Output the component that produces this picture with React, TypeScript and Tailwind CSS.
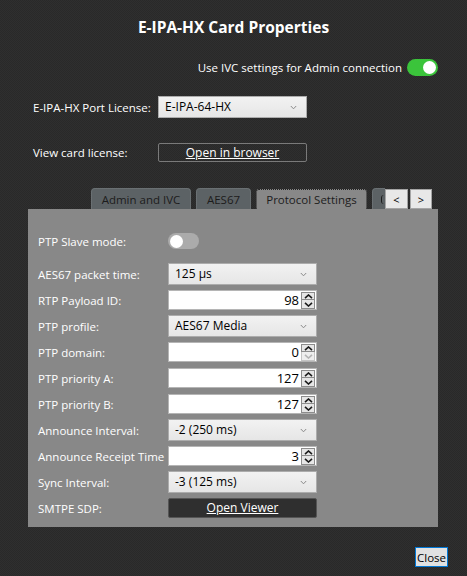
import React from "react";

const Chevron = () => (
  <svg width="7" height="5" viewBox="0 0 7 5" className="block">
    <path d="M0.8 1 L3.5 3.8 L6.2 1" fill="none" stroke="#8a8a8a" strokeWidth="1" />
  </svg>
);

function Select({ value }: { value: string }) {
  return (
    <div className="w-[149px] h-[22px] flex items-center justify-between pl-[6px] pr-[9px] border border-[#acacac] bg-gradient-to-b from-[#f2f2f2] to-[#e6e6e6] text-black text-[12px] leading-none">
      <span>{value}</span>
      <Chevron />
    </div>
  );
}

function Spinner({ downDisabled }: { downDisabled?: boolean }) {
  return (
    <div className="flex flex-col w-[14px] h-[17px] mr-[1px]">
      <div className="h-[8.5px] border border-[#8c8c8c] bg-[#e6e6e6] flex items-center justify-center">
        <svg width="9" height="5" viewBox="0 0 9 5">
          <path d="M1 4.2 L4.5 1 L8 4.2" fill="none" stroke="#1a1a1a" strokeWidth="1.6" />
        </svg>
      </div>
      <div
        className={
          downDisabled
            ? "h-[8.5px] border border-t-0 border-[#c4c4c4] bg-[#eeeeee] flex items-center justify-center"
            : "h-[8.5px] border border-t-0 border-[#8c8c8c] bg-[#e6e6e6] flex items-center justify-center"
        }
      >
        <svg width="9" height="5" viewBox="0 0 9 5">
          <path
            d="M1 0.8 L4.5 4 L8 0.8"
            fill="none"
            stroke={downDisabled ? "#b4b4b4" : "#1a1a1a"}
            strokeWidth="1.6"
          />
        </svg>
      </div>
    </div>
  );
}

function NumInput({ value, downDisabled }: { value: string; downDisabled?: boolean }) {
  return (
    <div className="w-[149px] h-[20px] bg-white border border-[#b5b5b5] flex items-center text-black text-[13px] leading-none">
      <span className="flex-1 text-right pr-[2px]">{value}</span>
      <Spinner downDisabled={downDisabled} />
    </div>
  );
}

function Row({ label, children }: { label: string; children: React.ReactNode }) {
  return (
    <div className="h-[26px] flex items-center">
      <div className="w-[130px] text-white text-[11.5px] whitespace-nowrap">{label}</div>
      {children}
    </div>
  );
}

export default function App() {
  return (
    <div className="w-[467px] h-[576px] bg-[#2c2c2c] bg-[repeating-conic-gradient(#2f2f2f_0_25%,#292929_0_50%)] bg-[length:2px_2px] font-['Segoe_UI','Open_Sans',sans-serif] flex flex-col overflow-hidden">
      <div className="pt-[16px] h-[38px] text-center text-white text-[15.5px] font-bold leading-[22px]">
        E-IPA-HX Card Properties
      </div>

      <div className="mt-[21px] flex items-center justify-end pr-[29px]">
        <span className="text-white text-[11.5px] mr-[5px]">Use IVC settings for Admin connection</span>
        <div className="w-[31px] h-[17px] rounded-full bg-[#3bc43b] flex items-center justify-end pr-[2px]">
          <div className="w-[13px] h-[13px] rounded-full bg-white" />
        </div>
      </div>

      <div className="mt-[20px] flex items-center pl-[33px]">
        <span className="w-[125px] text-white text-[11.5px]">E-IPA-HX Port License:</span>
        <Select value="E-IPA-64-HX" />
      </div>

      <div className="mt-[25px] flex items-center pl-[33px]">
        <span className="w-[125px] text-white text-[11.5px]">View card license:</span>
        <div className="w-[149px] h-[19px] border border-[#7a7a7a] rounded-[2px] flex items-center justify-center text-white text-[12px] underline">
          Open in browser
        </div>
      </div>

      <div className="mt-[26px] flex items-end pl-[91px] h-[21px]">
        <div className="w-[100px] h-[21px] rounded-t-[4px] bg-[#5c6265] border border-b-0 border-[#6a7073] flex items-center justify-center text-[#1c1c1c] text-[11.5px]">
          Admin and IVC
        </div>
        <div className="ml-[5px] w-[55px] h-[21px] rounded-t-[4px] bg-[#5c6265] border border-b-0 border-[#6a7073] flex items-center justify-center text-[#1c1c1c] text-[11.5px]">
          AES67
        </div>
        <div className="ml-[5px] w-[111px] h-[20px] rounded-t-[3px] bg-[#888888] border border-b-0 border-dotted border-[#222] flex items-center justify-center text-[#1c1c1c] text-[11.5px]">
          Protocol Settings
        </div>
        <div className="ml-[5px] w-[13px] h-[21px] rounded-tl-[4px] bg-[#5c6265] border border-b-0 border-r-0 border-[#6a7073] overflow-hidden flex items-center">
          <div className="ml-[8px] w-[3px] h-[9px] border-l-[1.5px] border-[#1c1c1c] rounded-l-[3px]" />
        </div>
        <div className="w-[23px] h-[20px] bg-[#e8e8e8] border border-[#a5a5a5] flex items-center justify-center text-black text-[11px] leading-none">
          &lt;
        </div>
        <div className="ml-[2px] w-[22px] h-[20px] bg-[#e8e8e8] border border-[#a5a5a5] flex items-center justify-center text-black text-[11px] leading-none">
          &gt;
        </div>
      </div>

      <div className="ml-[28px] w-[410px] h-[318px] bg-[#888888] pt-[19px] pl-[10px] flex flex-col">
        <Row label="PTP Slave mode:">
          <div className="w-[31px] h-[16px] rounded-full bg-[#ababab] flex items-center pl-[2px]">
            <div className="w-[13px] h-[13px] rounded-full bg-white" />
          </div>
        </Row>
        <div className="mt-[7px] flex flex-col">
          <Row label="AES67 packet time:">
            <Select value="125 µs" />
          </Row>
          <Row label="RTP Payload ID:">
            <NumInput value="98" />
          </Row>
          <Row label="PTP profile:">
            <Select value="AES67 Media" />
          </Row>
          <Row label="PTP domain:">
            <NumInput value="0" downDisabled />
          </Row>
          <Row label="PTP priority A:">
            <NumInput value="127" />
          </Row>
          <Row label="PTP priority B:">
            <NumInput value="127" />
          </Row>
          <Row label="Announce Interval:">
            <Select value="-2 (250 ms)" />
          </Row>
          <Row label="Announce Receipt Time">
            <NumInput value="3" />
          </Row>
          <Row label="Sync Interval:">
            <Select value="-3 (125 ms)" />
          </Row>
          <Row label="SMTPE SDP:">
            <div className="w-[149px] h-[20px] bg-[#2f2f2f] border border-[#555] rounded-[2px] flex items-center justify-center text-white text-[12px] underline">
              Open Viewer
            </div>
          </Row>
        </div>
      </div>

      <div className="mt-[20px] flex justify-end pr-[19px]">
        <div className="w-[33px] h-[20px] bg-[#e1e1e1] border border-[#0078d7] flex items-center justify-center text-black text-[11.5px] leading-none">
          Close
        </div>
      </div>
    </div>
  );
}
